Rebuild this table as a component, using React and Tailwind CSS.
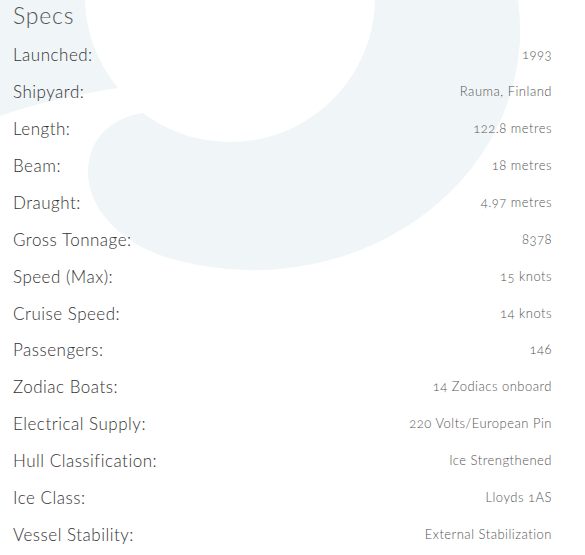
import React from 'react';

const specs = [
  ['Launched:', '1993'],
  ['Shipyard:', 'Rauma, Finland'],
  ['Length:', '122.8 metres'],
  ['Beam:', '18 metres'],
  ['Draught:', '4.97 metres'],
  ['Gross Tonnage:', '8378'],
  ['Speed (Max):', '15 knots'],
  ['Cruise Speed:', '14 knots'],
  ['Passengers:', '146'],
  ['Zodiac Boats:', '14 Zodiacs onboard'],
  ['Electrical Supply:', '220 Volts/European Pin'],
  ['Hull Classification:', 'Ice Strengthened'],
  ['Ice Class:', 'Lloyds 1AS'],
  ['Vessel Stability:', 'External Stabilization'],
];

// faint wave mark behind the list
function WaveMark() {
  return (
    <svg className="absolute inset-0 w-full h-full pointer-events-none" viewBox="0 0 585 555" preserveAspectRatio="none">
      <path fill="#f0f5f8" d="M0,0 L85,0 A145,145 0 0,0 118,88 C80,94 40,102 0,116 Z" />
      <path
        fill="#f0f5f8"
        d="M375,0 L518,0 A267,240 0 0,1 180,261 C130,250 90,215 88,175 C87,140 110,118 143,113 A145,145 0 0,0 375,0 Z"
      />
    </svg>
  );
}

export default function App() {
  return (
    <div className="relative w-[585px] h-[555px] bg-white overflow-hidden font-['Lato',sans-serif] font-light oldstyle-nums">
      <WaveMark />
      <div className="relative pl-[13px] pr-[33px]">
        <h2 className="h-[36.5px] leading-[30px] text-[23px] tracking-[0.8px] text-[#555]">Specs</h2>
        {specs.map(([label, value]) => (
          <div key={label} className="flex justify-between items-center h-[36.92px]">
            <span className="text-[17px] tracking-[0.5px] text-[#333]">{label}</span>
            <span className="text-[13px] tracking-[0.5px] text-[#555]">{value}</span>
          </div>
        ))}
      </div>
    </div>
  );
}
